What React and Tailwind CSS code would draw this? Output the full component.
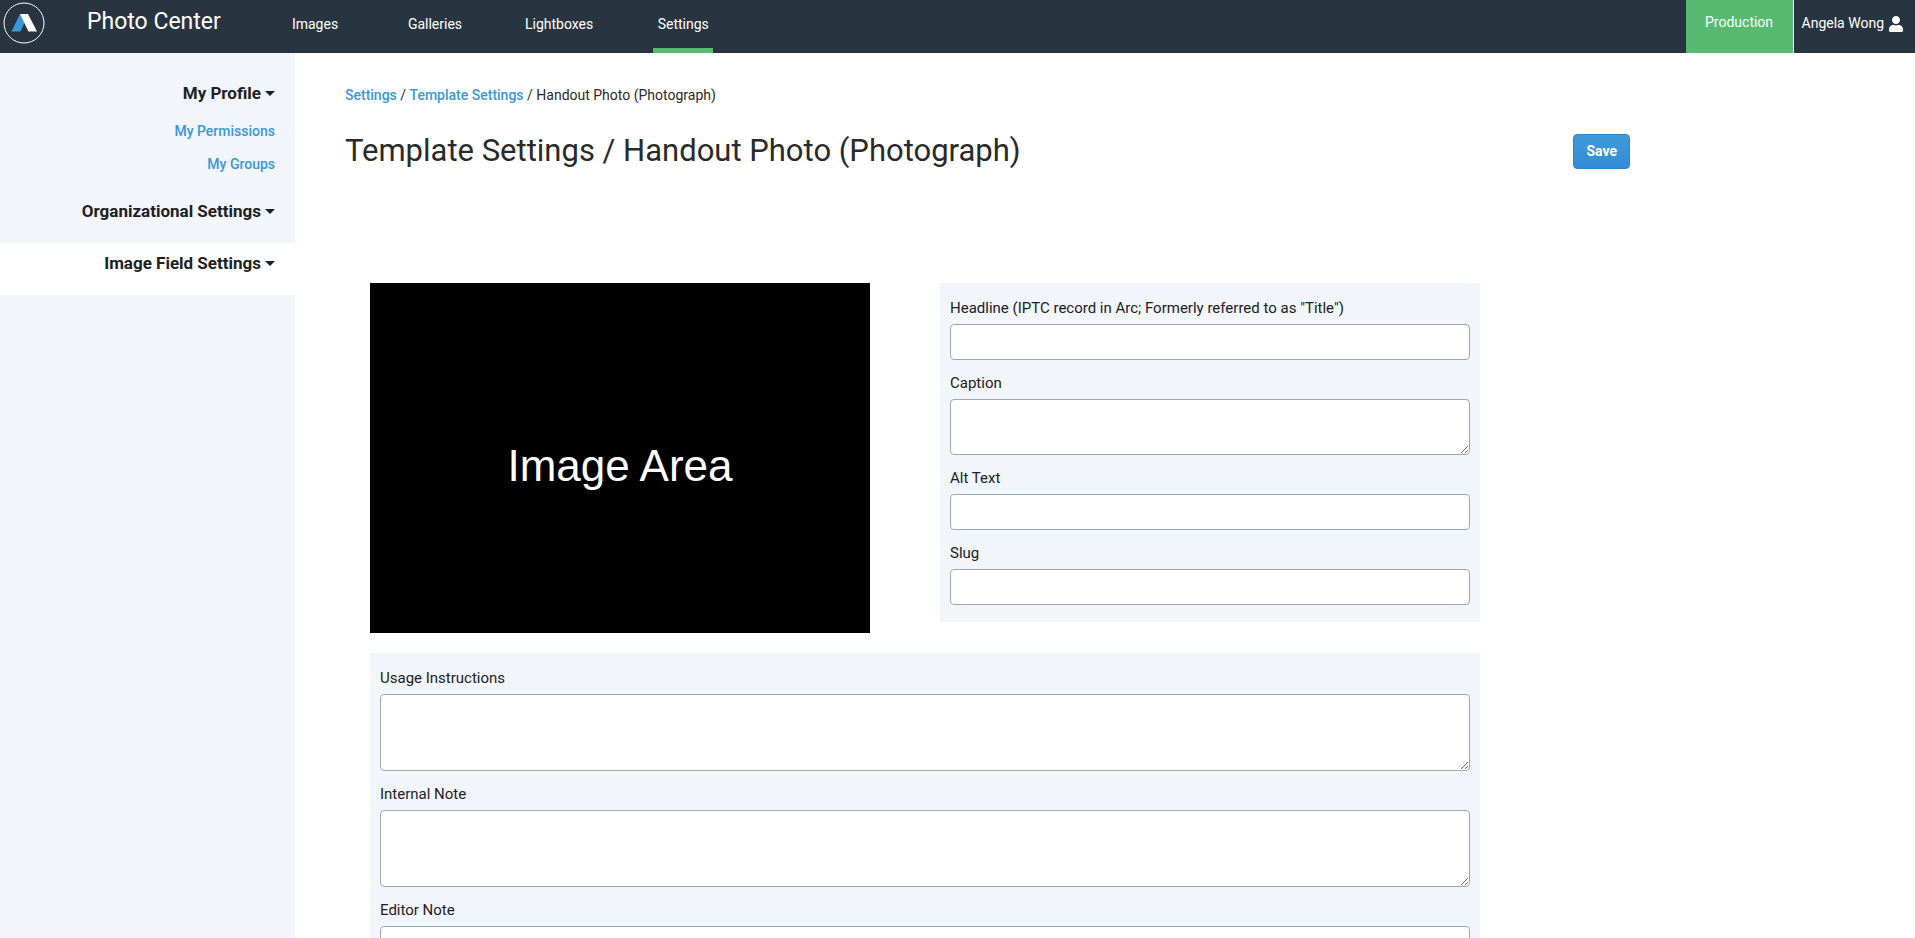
import { useState } from 'react';
import { FaUser } from 'react-icons/fa';

const navItems = ['Images', 'Galleries', 'Lightboxes', 'Settings'];

const sections = [
  { title: 'My Profile', links: ['My Permissions', 'My Groups'] },
  { title: 'Organizational Settings' },
  { title: 'Image Field Settings' }
];

const mainFields = [
  { name: 'headline', label: 'Headline (IPTC record in Arc; Formerly referred to as "Title")' },
  { name: 'caption', label: 'Caption', area: 'h-14' },
  { name: 'altText', label: 'Alt Text' },
  { name: 'slug', label: 'Slug' }
];

const noteFields = [
  { name: 'usage', label: 'Usage Instructions', area: 'h-[77px]' },
  { name: 'internalNote', label: 'Internal Note', area: 'h-[77px]' },
  { name: 'editorNote', label: 'Editor Note', area: 'h-[77px]' }
];

const Logo = () => (
  <svg viewBox="0 0 42 42" className="size-[42px]" aria-hidden="true">
    <circle cx="21" cy="21" r="20" fill="none" stroke="#fff" strokeWidth="1" />
    <path d="M17 12 L21.5 21 L17.5 29.5 H8.5 Z" fill="#3b97da" />
    <path d="M17 12 H25 L34 29.5 H25.5 Z" fill="#fff" />
  </svg>
);

const Caret = () => (
  <svg viewBox="0 0 10 5" className="h-[5px] w-2.5" aria-hidden="true">
    <path d="M0 0 H10 L5 5 Z" fill="currentColor" />
  </svg>
);

const Header = () => (
  <header className="flex h-[53px] shrink-0 bg-[#283541] text-sm text-white">
    <a href="#home" aria-label="Home" className="ml-[3px] pt-0.5">
      <Logo />
    </a>
    <div className="ml-[42px] w-[198px] pt-2 text-[23px] leading-7">Photo Center</div>

    <nav className="flex gap-[60px]">
      {navItems.map((item) => (
        <a
          key={item}
          href={`#${item.toLowerCase()}`}
          className={`min-w-[60px] border-b-[5px] pt-3.5 text-center leading-5 ${
            item === 'Settings' ? 'border-[#57ba71]' : 'border-transparent'
          }`}
        >
          {item}
        </a>
      ))}
    </nav>

    <div className="ml-auto flex">
      <div className="w-[108px] border-r border-white bg-[#57ba71] pt-3 text-center leading-5">Production</div>
      <button type="button" className="flex items-start gap-1 pt-[13px] pr-[11px] pl-2 leading-5">
        Angela Wong
        <FaUser className="mt-[3px] size-4" />
      </button>
    </div>
  </header>
);

const Sidebar = () => (
  <aside className="w-[295px] shrink-0 bg-[#f2f5fa] pt-5 text-right">
    {sections.map(({ title, links }) => (
      <div
        key={title}
        className={`pt-2 pr-5 ${links ? 'pb-[17px]' : 'pb-5'} ${title === 'Image Field Settings' ? 'bg-white' : ''}`}
      >
        <button type="button" className="inline-flex items-center gap-1 align-top text-[17px] leading-6 font-bold text-[#1d2126]">
          {title}
          <Caret />
        </button>
        {links && (
          <ul className="mt-4 flex flex-col gap-[13px] text-sm leading-5 font-medium">
            {links.map((link) => (
              <li key={link}>
                <a href="#profile" className="text-[#3b97da]">{link}</a>
              </li>
            ))}
          </ul>
        )}
      </div>
    ))}
  </aside>
);

const Field = ({ name, label, area, value, onChange }) => {
  const box = 'block w-full rounded border border-[#9da8b4] bg-white px-2 text-sm';

  return (
    <div>
      <label htmlFor={name} className="mb-1.5 block text-[15px] leading-5 text-[#1d2126]">
        {label}
      </label>
      {area ? (
        <textarea id={name} name={name} value={value} onChange={onChange} className={`${box} ${area} resize py-1`} />
      ) : (
        <input id={name} type="text" name={name} value={value} onChange={onChange} className={`${box} h-9`} />
      )}
    </div>
  );
};

const App = () => {
  const [formData, setFormData] = useState({});

  const handleChange = (e) => {
    setFormData({
      ...formData,
      [e.target.name]: e.target.value
    });
  };

  const renderField = (field) => (
    <Field key={field.name} {...field} value={formData[field.name] || ''} onChange={handleChange} />
  );

  return (
    <div className="flex h-screen flex-col overflow-hidden bg-white font-[Roboto,sans-serif] text-[#2a2a2a]">
      <Header />

      <div className="flex min-h-0 flex-1">
        <Sidebar />

        <main className="flex-1 overflow-y-auto px-[50px] pt-8 [scrollbar-width:none]">
          <form className="max-w-[1285px]" onSubmit={(e) => e.preventDefault()}>
            <div className="text-sm leading-5">
              <a href="#settings" className="font-medium text-[#3b97da]">Settings</a>
              {' / '}
              <a href="#templates" className="font-medium text-[#3b97da]">Template Settings</a>
              {' / '}
              Handout Photo (Photograph)
            </div>

            <div className="mt-7 flex items-center justify-between">
              <h1 className="text-[31px] leading-9">Template Settings / Handout Photo (Photograph)</h1>
              <button
                type="submit"
                className="h-[35px] rounded border border-[#2a86cf] bg-linear-to-b from-[#3f99da] to-[#318dd6] px-3 text-sm font-bold text-white"
              >
                Save
              </button>
            </div>

            <div className="mt-[114px] ml-[25px] max-w-[1110px] pb-10">
              <div className="flex items-start justify-between gap-5">
                {/* Aperçu de l'image */}
                <div className="flex h-[350px] w-[500px] items-center justify-center bg-black pt-4 font-['Liberation_Sans_Narrow','Liberation_Sans',sans-serif] text-[44px] text-white">
                  Image Area
                </div>
                <div className="flex w-[540px] flex-col gap-[13px] bg-[#f2f5fa] px-2.5 pt-[15px] pb-[17px]">
                  {mainFields.map(renderField)}
                </div>
              </div>

              <div className="mt-5 flex flex-col gap-[13px] bg-[#f2f5fa] px-2.5 pt-[15px] pb-[17px]">
                {noteFields.map(renderField)}
              </div>
            </div>
          </form>
        </main>
      </div>
    </div>
  );
};

export default App;
